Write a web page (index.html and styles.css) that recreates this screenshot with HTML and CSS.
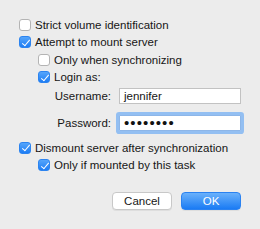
FILE: index.html
```html
<!DOCTYPE html>
<html>
<head>
<meta charset="utf-8">
<link rel="stylesheet" href="styles.css">
</head>
<body>
<div class="dialog">
  <div class="row"><span class="cb"></span><span class="label">Strict volume identification</span></div>
  <div class="row"><span class="cb on"></span><span class="label">Attempt to mount server</span></div>
  <div class="row indent"><span class="cb"></span><span class="label">Only when synchronizing</span></div>
  <div class="row indent"><span class="cb on"></span><span class="label">Login as:</span></div>
  <div class="fields">
    <div class="field">
      <span class="flabel">Username:</span>
      <div class="input">jennifer</div>
    </div>
    <div class="field">
      <span class="flabel">Password:</span>
      <div class="input focus"><span class="dots">••••••••</span></div>
    </div>
  </div>
  <div class="row dismount"><span class="cb on"></span><span class="label">Dismount server after synchronization</span></div>
  <div class="row indent"><span class="cb on"></span><span class="label">Only if mounted by this task</span></div>
  <div class="buttons">
    <button class="btn">Cancel</button>
    <button class="btn primary">OK</button>
  </div>
</div>
</body>
</html>
```
FILE: styles.css
```css
html, body {
  margin: 0;
  padding: 0;
  background: #ececec;
}
body {
  width: 260px;
  height: 229px;
  overflow: hidden;
  font-family: "Liberation Sans", Arial, sans-serif;
  font-size: 11.5px;
  color: #161616;
}
.dialog {
  padding: 16px 19px 0 19px;
  display: flex;
  flex-direction: column;
}
.row {
  height: 17.5px;
  display: flex;
  align-items: center;
  gap: 4px;
}
.row.indent {
  margin-left: 19px;
}
.cb {
  box-sizing: border-box;
  width: 12px;
  height: 12px;
  border: 1px solid #b4b4b4;
  border-radius: 3px;
  background: #fff;
  flex: none;
  position: relative;
}
.cb.on {
  border-color: #2c84f0;
  background: linear-gradient(#55a5fb, #1d7df4);
}
.cb.on::after {
  content: "";
  position: absolute;
  left: 3.5px;
  top: 0.5px;
  width: 3px;
  height: 7px;
  border-right: 1.6px solid #fff;
  border-bottom: 1.6px solid #fff;
  transform: rotate(40deg);
}
.fields {
  margin-top: 2px;
  display: flex;
  flex-direction: column;
  gap: 11px;
}
.field {
  display: grid;
  grid-template-columns: 92px 122px;
  column-gap: 8px;
  align-items: center;
}
.flabel {
  text-align: right;
}
.input {
  box-sizing: border-box;
  height: 16px;
  background: #fff;
  border: 1px solid #c2c2c2;
  padding-left: 4px;
  line-height: 14px;
  display: flex;
  align-items: center;
}
.input.focus {
  border-color: #8db6e8;
  box-shadow: 0 0 0 3px #93bff2;
  border-radius: 1px;
}
.dots {
  font-size: 15px;
  letter-spacing: 1.1px;
  color: #111;
  line-height: 14px;
}
.dismount {
  margin-top: 8px;
}
.buttons {
  margin-top: 18px;
  display: flex;
  justify-content: flex-end;
  gap: 9px;
}
.btn {
  box-sizing: border-box;
  width: 60px;
  height: 18px;
  font-family: "Liberation Sans", Arial, sans-serif;
  font-size: 11.5px;
  border-radius: 4px;
  border: 1px solid #c8c8c8;
  background: #fff;
  color: #161616;
  padding: 0;
  box-shadow: 0 1px 0 rgba(0,0,0,0.06);
}
.btn.primary {
  border-color: #2a82f1;
  background: linear-gradient(#6ab1fb, #1a7bf4);
  color: #fff;
}
```
